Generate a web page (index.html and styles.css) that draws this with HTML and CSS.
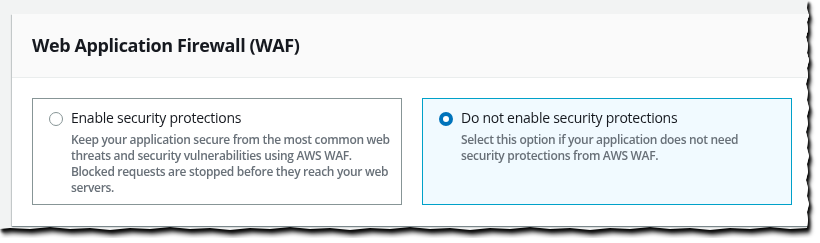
FILE: index.html
```html
<!DOCTYPE html>
<html lang="en">
<head>
  <meta charset="UTF-8" />
  <title>Web Application Firewall (WAF)</title>
  <link rel="stylesheet" href="styles.css">
</head>
<body>

  <div class="frame">
    <div class="shot">
      <section class="card">
        <header class="card-header">
          <h2>Web Application Firewall (WAF)</h2>
        </header>

        <div class="card-body">
          <label class="tile">
            <input type="radio" name="waf" value="enable">
            <span class="tile-text">
              <span class="tile-title">Enable security protections</span>
              <span class="tile-desc">Keep your application secure from the most common web threats and security vulnerabilities using AWS WAF. Blocked requests are stopped before they reach your web servers.</span>
            </span>
          </label>

          <label class="tile selected">
            <input type="radio" name="waf" value="disable" checked>
            <span class="tile-text">
              <span class="tile-title">Do not enable security protections</span>
              <span class="tile-desc">Select this option if your application does not need security protections from AWS WAF.</span>
            </span>
          </label>
        </div>
      </section>
    </div>
  </div>

</body>
</html>
```

FILE: styles.css
```css
body {
  margin: 0;
  background: #fff;
  font-family: 'Open Sans', sans-serif;
  color: #16191f;
}
.frame {
  width: 815px;
  height: 238px;
  filter: drop-shadow(2px 3px 1.5px rgba(0,0,0,0.95)) drop-shadow(1px 3px 1.5px rgba(0,0,0,0.6));
}
.shot {
  height: 230px;
  background: #f2f3f3;
  padding: 14px 0 0 12px;
  box-sizing: border-box;
  overflow: hidden;
  clip-path: polygon(0 0, 808px 0, 807px 8px, 809px 15px, 807px 22px, 808px 30px, 806px 37px, 808px 45px, 807px 53px, 809px 60px, 807px 68px, 808px 76px, 806px 84px, 808px 92px, 807px 100px, 809px 108px, 807px 116px, 808px 124px, 806px 132px, 808px 140px, 807px 148px, 809px 156px, 807px 164px, 808px 172px, 806px 180px, 808px 188px, 807px 196px, 809px 204px, 807px 212px, 808px 220px, 807px 228px, 790px 229px, 770px 227px, 750px 229px, 730px 228px, 710px 230px, 690px 228px, 670px 229px, 650px 227px, 630px 229px, 610px 228px, 590px 230px, 570px 228px, 550px 229px, 530px 227px, 510px 229px, 490px 228px, 470px 230px, 450px 228px, 430px 229px, 410px 227px, 390px 229px, 370px 228px, 350px 230px, 330px 228px, 310px 229px, 290px 227px, 270px 229px, 250px 228px, 230px 230px, 210px 228px, 190px 229px, 170px 227px, 150px 229px, 130px 228px, 110px 230px, 90px 228px, 70px 229px, 50px 227px, 30px 229px, 10px 228px, 0 229px);
}
.card {
  margin-right: -20px;
  background: #fff;
  box-shadow: 0 1px 1px 0 rgba(0,28,36,0.3), 1px 1px 1px 0 rgba(0,28,36,0.15), -1px 1px 1px 0 rgba(0,28,36,0.15);
}
.card-header {
  background: #fafafa;
  border-bottom: 1px solid #eaeded;
  padding: 20px 20px;
}
.card-header h2 {
  margin: 0;
  font-size: 18px;
  line-height: 23px;
  font-weight: 700;
  letter-spacing: -0.4px;
}
.card-body {
  display: flex;
  gap: 20px;
  padding: 20px 20px 21px;
}
.tile {
  width: 370px;
  height: 107px;
  box-sizing: border-box;
  border: 1px solid #879596;
  padding: 9px 10px 9px 16px;
  display: flex;
  gap: 8px;
  align-items: flex-start;
}
.tile.selected {
  border-color: #00a1c9;
  background: #f1faff;
}
.tile input {
  appearance: none;
  margin: 4px 0 0;
  width: 14px;
  height: 14px;
  flex: none;
  border: 1px solid #879596;
  border-radius: 50%;
  background: #fff;
  box-sizing: border-box;
}
.tile input:checked {
  border: 4px solid #0073bb;
}
.tile-text {
  display: flex;
  flex-direction: column;
}
.tile-title {
  font-size: 14px;
  line-height: 20px;
  letter-spacing: -0.25px;
}
.tile-desc {
  margin-top: 4px;
  font-size: 12px;
  line-height: 16px;
  color: #687078;
  font-weight: 600;
  letter-spacing: -0.32px;
}
```
